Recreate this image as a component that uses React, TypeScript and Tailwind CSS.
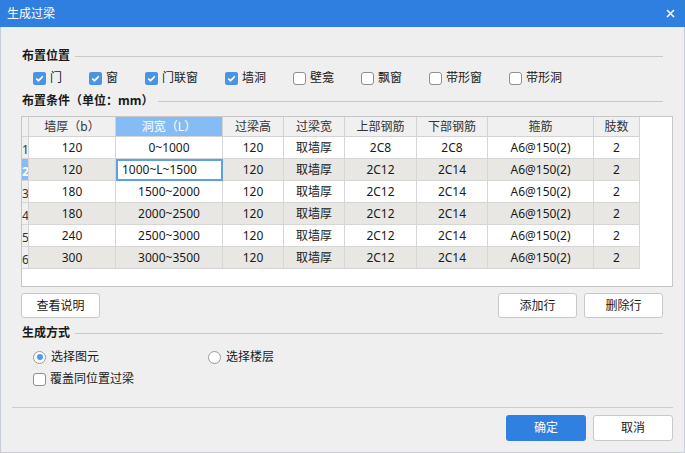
import React from "react";

const FONT = { fontFamily: '"Noto Sans", "Noto Sans CJK SC", sans-serif' };

const colWidths = [
  "w-[87px]",
  "w-[107px]",
  "w-[61px]",
  "w-[61px]",
  "w-[72px]",
  "w-[71px]",
  "w-[106px]",
  "w-[46px]",
];

const headers = ["墙厚（b）", "洞宽（L）", "过梁高", "过梁宽", "上部钢筋", "下部钢筋", "箍筋", "肢数"];

const rows = [
  ["120", "0~1000", "120", "取墙厚", "2C8", "2C8", "A6@150(2)", "2"],
  ["120", "1000~L~1500", "120", "取墙厚", "2C12", "2C14", "A6@150(2)", "2"],
  ["180", "1500~2000", "120", "取墙厚", "2C12", "2C14", "A6@150(2)", "2"],
  ["180", "2000~2500", "120", "取墙厚", "2C12", "2C14", "A6@150(2)", "2"],
  ["240", "2500~3000", "120", "取墙厚", "2C12", "2C14", "A6@150(2)", "2"],
  ["300", "3000~3500", "120", "取墙厚", "2C12", "2C14", "A6@150(2)", "2"],
];

const positions = [
  { label: "门", checked: true },
  { label: "窗", checked: true },
  { label: "门联窗", checked: true },
  { label: "墙洞", checked: true },
  { label: "壁龛", checked: false },
  { label: "飘窗", checked: false },
  { label: "带形窗", checked: false },
  { label: "带形洞", checked: false },
];

const CheckBox: React.FC<{ checked?: boolean }> = ({ checked }) =>
  checked ? (
    <span className="flex h-[13px] w-[13px] items-center justify-center rounded-[2px] bg-[#4d93e4]">
      <svg width="11" height="11" viewBox="0 0 11 11">
        <path d="M2.3 5.6 L4.5 7.7 L8.8 3.3" fill="none" stroke="#fff" strokeWidth="1.7" />
      </svg>
    </span>
  ) : (
    <span className="block h-[13px] w-[13px] rounded-[3px] border border-[#8f8f8f] bg-white" />
  );

const Radio: React.FC<{ checked?: boolean }> = ({ checked }) => (
  <span className="flex h-[13px] w-[13px] items-center justify-center rounded-full border border-[#9a9a9a] bg-white">
    {checked && <span className="block h-[6px] w-[6px] rounded-full bg-[#4d9af0]" />}
  </span>
);

const SectionTitle: React.FC<{ text: string; className?: string }> = ({ text, className }) => (
  <div className={`flex h-[16px] items-center ${className ?? ""}`}>
    <span className="pl-[1px] text-[12px] font-bold leading-none text-[#1a1a1a]">{text}</span>
    <div className="ml-[5px] mr-[10px] h-px flex-1 bg-[#c9c9c9]" />
  </div>
);

const Button: React.FC<{ children: React.ReactNode; primary?: boolean; className?: string }> = ({
  children,
  primary,
  className,
}) => (
  <button
    type="button"
    className={`flex items-center justify-center rounded-[3px] text-[12px] leading-none ${
      primary ? "bg-[#2f80e1] text-white" : "border border-[#c8c8c8] bg-white text-[#1a1a1a]"
    } ${className ?? ""}`}
  >
    {children}
  </button>
);

export default function App() {
  return (
    <div className="flex h-[453px] w-[685px] flex-col" style={FONT}>
      {/* title bar */}
      <div className="flex h-[27px] shrink-0 items-center justify-between bg-[#2e7fe0] pl-[7px] pr-[10px]">
        <span className="text-[12px] leading-none text-white">生成过梁</span>
        <svg width="9" height="9" viewBox="0 0 9 9">
          <path d="M1 1 L8 8 M8 1 L1 8" stroke="#fff" strokeWidth="1.5" />
        </svg>
      </div>

      <div className="flex flex-1 flex-col border-x border-b border-[#c7cdd9] bg-[#efefef] pl-[20px] pr-[11px] pt-[21px] text-[#1a1a1a]">
        <SectionTitle text="布置位置" />

        <div className="mt-[6px] flex h-[16px] items-center gap-[27px] pl-[12px]">
          {positions.map((p) => (
            <label key={p.label} className="flex items-center gap-[4px] text-[12px] leading-none">
              <CheckBox checked={p.checked} />
              <span>{p.label}</span>
            </label>
          ))}
        </div>

        <SectionTitle text="布置条件（单位：mm）" className="mt-[7px]" />

        {/* table */}
        <div className="mt-[7px] h-[171px] w-[652px] shrink-0 border border-[#c6c6c6] bg-white">
          <div className="flex h-[20px] w-[618px] border-b border-[#d3d3d3] bg-[#f0f0f0] text-[12px] text-[#333]">
            <div className="h-full w-[7px] border-r border-[#d3d3d3]" />
            {headers.map((h, i) => (
              <div
                key={h}
                className={`flex h-full items-center justify-center border-r border-[#d3d3d3] ${colWidths[i]} ${
                  i === 1 ? "bg-[#86bcf5] text-white" : ""
                }`}
              >
                {h}
              </div>
            ))}
          </div>
          {rows.map((r, ri) => {
            const even = ri % 2 === 1;
            const sel = ri === 1;
            return (
              <div
                key={ri}
                className={`flex h-[22px] w-[618px] border-b border-[#d6d6d6] text-[12px] text-[#1a1a1a] ${
                  even ? "bg-[#e8e7e4]" : "bg-white"
                }`}
              >
                <div
                  className={`flex h-full w-[7px] items-end overflow-hidden border-r border-[#d3d3d3] pb-[2px] text-[12px] leading-none ${
                    sel ? "bg-[#86bcf5] font-bold text-white" : "bg-[#f0f0f0] text-[#333]"
                  }`}
                >
                  {ri + 1}
                </div>
                {r.map((c, ci) =>
                  sel && ci === 1 ? (
                    <div
                      key={ci}
                      className={`flex h-[22px] items-center border-2 border-[#5f9fe6] bg-white pl-[4px] ${colWidths[ci]}`}
                    >
                      {c}
                    </div>
                  ) : (
                    <div
                      key={ci}
                      className={`flex h-full items-center justify-center border-r border-[#d6d6d6] ${colWidths[ci]}`}
                    >
                      {c}
                    </div>
                  )
                )}
              </div>
            );
          })}
        </div>

        <div className="mr-[10px] mt-[6px] flex items-center">
          <Button className="h-[25px] w-[79px]">查看说明</Button>
          <div className="flex-1" />
          <Button className="h-[25px] w-[79px]">添加行</Button>
          <Button className="ml-[7px] h-[25px] w-[79px]">删除行</Button>
        </div>

        <SectionTitle text="生成方式" className="mt-[7px]" />

        <div className="mt-[8px] flex h-[16px] items-center pl-[12px] text-[12px] leading-none">
          <label className="flex w-[175px] items-center gap-[5px]">
            <Radio checked />
            <span>选择图元</span>
          </label>
          <label className="flex items-center gap-[5px]">
            <Radio />
            <span>选择楼层</span>
          </label>
        </div>

        <div className="mt-[6px] flex h-[16px] items-center pl-[12px] text-[12px] leading-none">
          <label className="flex items-center gap-[4px]">
            <CheckBox />
            <span>覆盖同位置过梁</span>
          </label>
        </div>

        <div className="-ml-[9px] mt-[20px] h-px bg-[#cdcdcd]" />

        <div className="mt-[7px] flex items-center justify-end gap-[7px]">
          <Button primary className="h-[26px] w-[80px]">
            确定
          </Button>
          <Button className="h-[26px] w-[80px]">取消</Button>
        </div>
      </div>
    </div>
  );
}
